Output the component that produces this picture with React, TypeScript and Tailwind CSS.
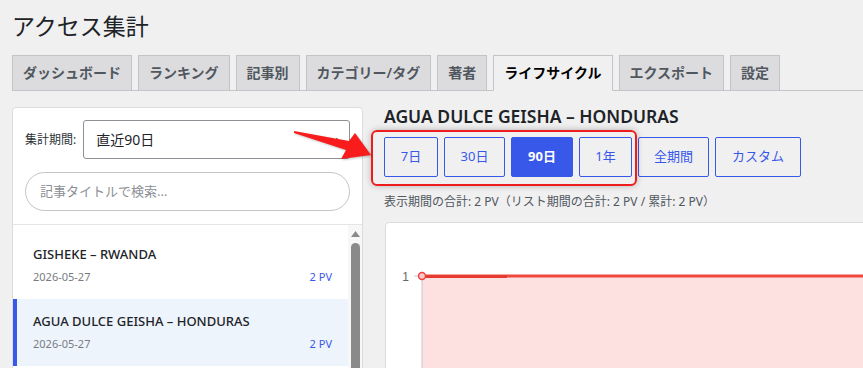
import React from "react";

const tabs = ["ダッシュボード", "ランキング", "記事別", "カテゴリー/タグ", "著者", "ライフサイクル", "エクスポート", "設定"];
const ranges: { label: string; w: string }[] = [
  { label: "7日", w: "w-[54px]" },
  { label: "30日", w: "w-[61px]" },
  { label: "90日", w: "w-[62px]" },
  { label: "1年", w: "w-[53px]" },
  { label: "全期間", w: "w-[71px]" },
  { label: "カスタム", w: "w-[86px]" },
];

export default function App() {
  return (
    <div
      className="relative w-[863px] h-[368px] overflow-hidden bg-[#f0f0f1] text-[#1d2327]"
      style={{ fontFamily: '"Noto Sans", "Noto Sans CJK JP", sans-serif' }}
    >
      <div className="w-[1100px] pl-[12px] pt-[11px]">
        <h1 className="text-[23px] leading-[30px] font-normal text-[#1d2327]">アクセス集計</h1>

        <nav className="mt-[14px] flex items-end gap-[6px] border-b border-[#c3c4c7] h-[36px]">
          {tabs.map((t) => {
            const active = t === "ライフサイクル";
            return (
              <div
                key={t}
                className={
                  active
                    ? "mb-[-1px] h-[36px] px-[10px] border border-[#c3c4c7] border-b-[#f0f0f1] bg-[#f0f0f1] text-[14px] leading-[34px] font-semibold text-black"
                    : "mb-[-1px] h-[36px] px-[10px] border border-[#c3c4c7] bg-[#dcdcde] text-[14px] leading-[34px] font-semibold text-[#50575e]"
                }
              >
                {t}
              </div>
            );
          })}
        </nav>

        <div className="mt-[16px] flex items-start gap-[21px]">
          {/* Left card */}
          <div className="w-[351px] h-[300px] bg-white border border-[#dcdcde] rounded-[4px] overflow-hidden flex flex-col">
            <div className="px-[12px] pt-[12px] pb-[13px] border-b border-[#e5e5e5]">
              <div className="flex items-center gap-[7px]">
                <span className="text-[12px] text-[#2c3338] whitespace-nowrap">集計期間:</span>
                <div className="w-[267px] h-[39px] border border-[#8c8f94] rounded-[3px] bg-white flex items-center justify-between pl-[12px] pr-[10px]">
                  <span className="text-[14px] text-[#1d2327]">直近90日</span>
                  <svg width="10" height="10" viewBox="0 0 10 10">
                    <path d="M1.5 3.5 L5 7 L8.5 3.5" fill="none" stroke="#2c3338" strokeWidth="1.6" />
                  </svg>
                </div>
              </div>
              <div className="mt-[13px] h-[39px] rounded-full border border-[#c3c4c7] flex items-center pl-[14px] text-[13px] text-[#8c8f94]">
                記事タイトルで検索...
              </div>
            </div>
            <div className="flex flex-1">
              <div className="flex-1 pt-[7px]">
                <div className="pl-[20px] pr-[16px] pt-[14px] pb-[14px]">
                  <div className="text-[13px] leading-[17px] font-medium text-[#1d2327]">GISHEKE – RWANDA</div>
                  <div className="mt-[6px] flex justify-between text-[11px] leading-[16px]">
                    <span className="text-[#787c82]">2026-05-27</span>
                    <span className="text-[#3858e9]">2 PV</span>
                  </div>
                </div>
                <div className="pl-[16px] pr-[16px] pt-[14px] pb-[14px] bg-[#eef4fc] border-l-4 border-[#3858e9]">
                  <div className="text-[13px] leading-[17px] font-medium text-[#1d2327]">AGUA DULCE GEISHA – HONDURAS</div>
                  <div className="mt-[6px] flex justify-between text-[11px] leading-[16px]">
                    <span className="text-[#787c82]">2026-05-27</span>
                    <span className="text-[#3858e9]">2 PV</span>
                  </div>
                </div>
              </div>
              <div className="w-[14px] bg-[#f7f7f7] flex flex-col items-center pt-[6px]">
                <svg width="9" height="6" viewBox="0 0 9 6">
                  <path d="M0 6 L4.5 0 L9 6 Z" fill="#8a8a8a" />
                </svg>
                <div className="mt-[6px] w-[9px] flex-1 rounded-full bg-[#8a8a8a]" />
              </div>
            </div>
          </div>

          {/* Right column */}
          <div className="w-[650px]">
            <div className="text-[17.5px] leading-[18px] font-semibold text-[#1d2327]">AGUA DULCE GEISHA – HONDURAS</div>
            <div className="mt-[12px] flex gap-[6px]">
              {ranges.map((r) => {
                const active = r.label === "90日";
                return (
                  <div
                    key={r.label}
                    className={
                      active
                        ? `${r.w} h-[40px] flex items-center justify-center rounded-[2px] border border-[#3858e9] bg-[#3858e9] text-white text-[13px] font-bold`
                        : `${r.w} h-[40px] flex items-center justify-center rounded-[2px] border border-[#3858e9] text-[#3858e9] text-[13px]`
                    }
                  >
                    {r.label}
                  </div>
                );
              })}
            </div>
            <div className="mt-[16px] text-[12px] leading-[18px] text-[#50575e]">
              表示期間の合計: 2 PV（リスト期間の合計: 2 PV / 累計: 2 PV）
            </div>
            <div className="mt-[11px] ml-[1px] w-[640px] h-[200px] bg-white border border-[#dcdcde] rounded-[4px] overflow-hidden">
              <svg width="640" height="200" viewBox="0 0 640 200">
                <rect x="36" y="53" width="604" height="147" fill="#fde1e1" />
                <line x1="36" y1="53" x2="36" y2="200" stroke="#c8c8c8" strokeWidth="1" />
                <line x1="28" y1="53" x2="35" y2="53" stroke="#d0d0d0" strokeWidth="1" />
                <text x="23" y="57.5" textAnchor="end" fontSize="12" fill="#666" fontFamily="Liberation Sans, sans-serif">1</text>
                <line x1="36" y1="53" x2="640" y2="53" stroke="#f0483d" strokeWidth="3" />
                <line x1="36" y1="53.5" x2="121" y2="53.5" stroke="#e53b30" strokeWidth="3" />
                <circle cx="36" cy="53" r="3.5" fill="#fbc9c9" stroke="#ef4444" strokeWidth="1.5" />
              </svg>
            </div>
          </div>
        </div>
      </div>

      {/* Annotation box */}
      <div className="absolute left-[371px] top-[130px] w-[266px] h-[56px] border-2 border-[#ee1c1c] rounded-[6px] shadow-[0_0_6px_rgba(0,0,0,0.25)]" />
      {/* Annotation arrow */}
      <svg className="absolute left-0 top-0" width="863" height="368" viewBox="0 0 863 368">
        <polygon
          points="294,131 349,141 355,133 371,155 341,159 346,150 294,133"
          fill="#f81c1c"
          style={{ filter: "drop-shadow(1px 1px 1px rgba(0,0,0,0.25))" }}
        />
      </svg>
    </div>
  );
}
